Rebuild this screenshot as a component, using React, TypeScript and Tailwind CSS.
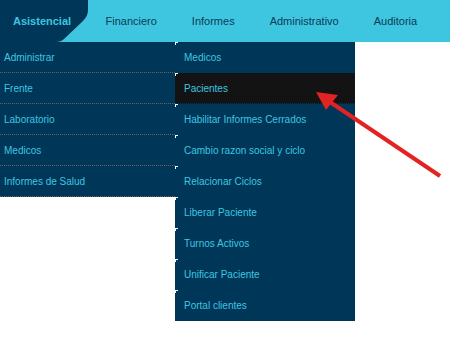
import React from "react";

const tabs = ["Financiero", "Informes", "Administrativo", "Auditoria"];

const leftItems = ["Administrar", "Frente", "Laboratorio", "Medicos", "Informes de Salud"];

const subItems = [
    "Medicos",
    "Pacientes",
    "Habilitar Informes Cerrados",
    "Cambio razon social y ciclo",
    "Relacionar Ciclos",
    "Liberar Paciente",
    "Turnos Activos",
    "Unificar Paciente",
    "Portal clientes",
];

export default function App() {
    return (
        <div
            className="relative h-[352px] w-[450px] overflow-hidden bg-white"
            style={{ fontFamily: '"Liberation Sans", Arial, sans-serif' }}
        >
            {/* TOP NAV */}
            <nav className="flex h-[42px] items-center bg-[#3ec6e0]">
                <div className="relative flex h-full w-[88px] items-center pl-[13px]">
                    {/* tab shape */}
                    <svg className="absolute inset-0" width="88" height="42" viewBox="0 0 88 42">
                        <path d="M0 0 H88 V10 Q88 16 83 21 L64 39 Q61 42 56 42 H0 Z" fill="#003658" />
                    </svg>
                    <span className="relative text-[11px] font-bold text-[#3ec6e0]">Asistencial</span>
                </div>
                {tabs.map((t) => (
                    <div key={t} className="px-[17.5px] text-[11px] text-[#0d3a57]">
                        {t}
                    </div>
                ))}
            </nav>

            {/* DROPDOWNS */}
            <div className="flex items-start">
                <ul className="w-[175px] bg-[#003658]">
                    {leftItems.map((item) => (
                        <li
                            key={item}
                            className="flex h-[31px] items-center border-b border-dotted border-[#6b625d] pl-[4px] text-[10px] text-[#3ec6e0]"
                        >
                            {item}
                        </li>
                    ))}
                </ul>

                <ul className="w-[180px] bg-[#003658]">
                    {subItems.map((item) => (
                        <li
                            key={item}
                            className={
                                item === "Pacientes"
                                    ? "relative flex h-[31px] items-center border-b border-dotted border-[#003658] bg-[#131313] pl-[9px] text-[10px] text-[#3ec6e0]"
                                    : "relative flex h-[31px] items-center border-b border-dotted border-[#003658] pl-[9px] text-[10px] text-[#3ec6e0]"
                            }
                        >
                            {/* tiny corner mark */}
                            <span className="absolute left-0 top-0 h-[1px] w-[3px] bg-white" />
                            <span className="absolute left-0 top-0 h-[3px] w-[1px] bg-white" />
                            {item}
                        </li>
                    ))}
                </ul>
            </div>

            {/* ANNOTATION ARROW */}
            <svg className="pointer-events-none absolute inset-0" width="450" height="352">
                <line x1="440" y1="176" x2="327" y2="100" stroke="#e32222" strokeWidth="4" />
                <polygon points="316,92 338,95 326,110" fill="#e32222" />
            </svg>
        </div>
    );
}
